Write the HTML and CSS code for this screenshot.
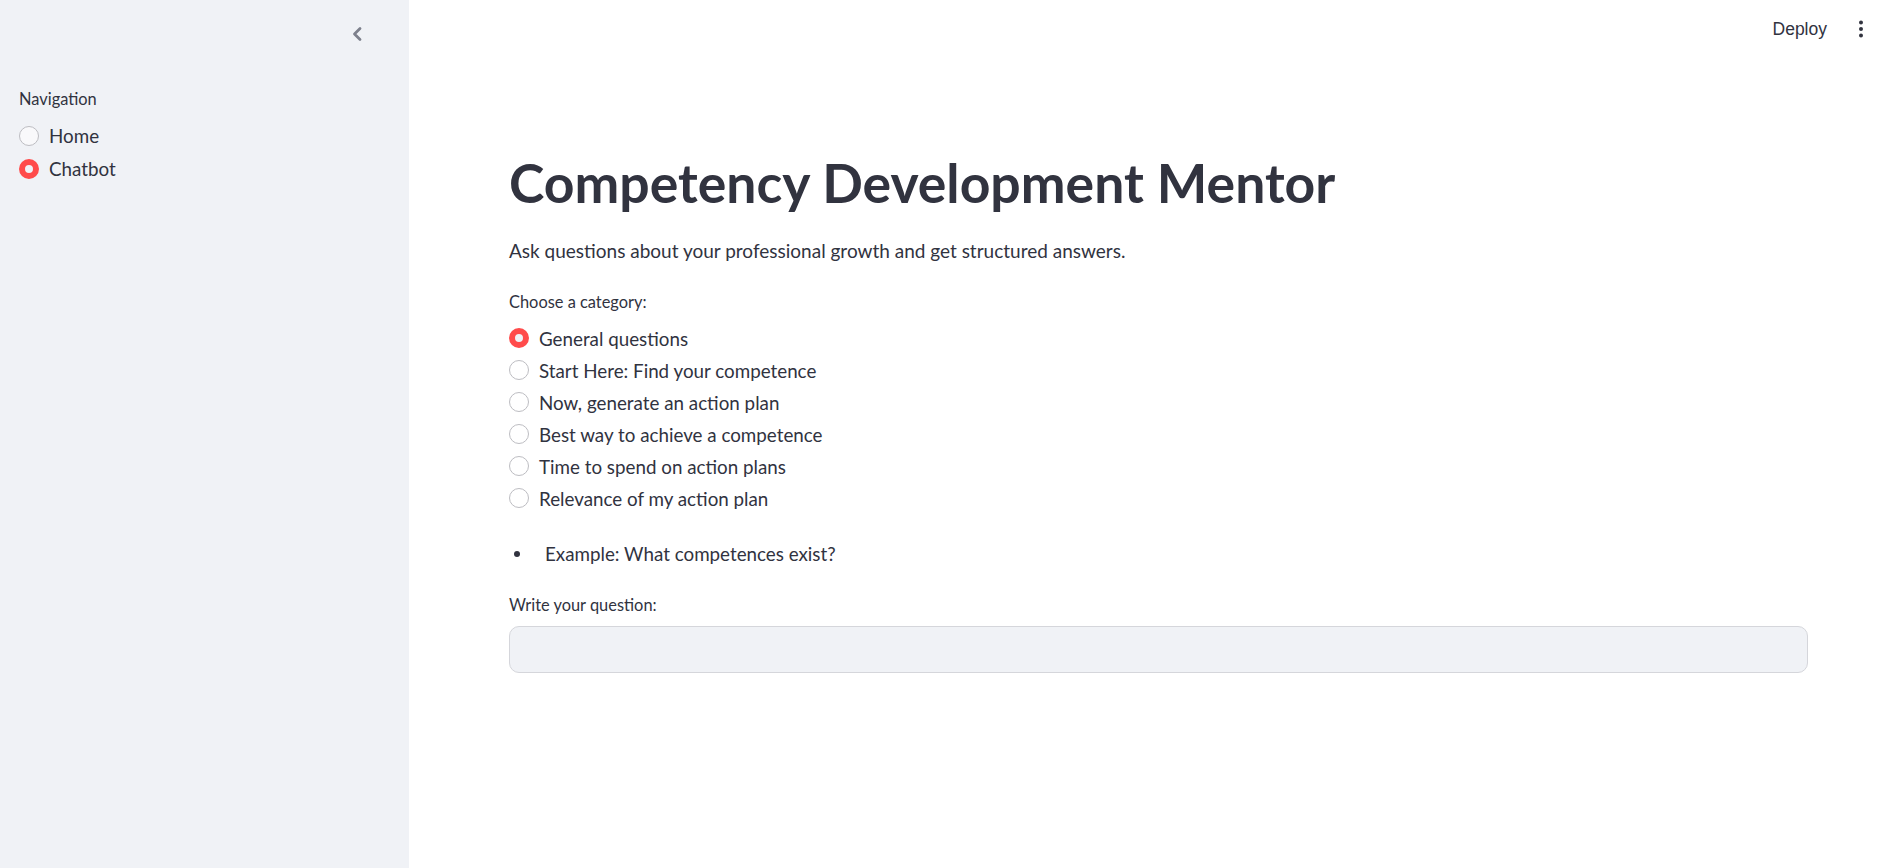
FILE: index.html
```html
<!DOCTYPE html>
<html lang="en">

<head>
    <meta charset="UTF-8">
    <meta name="viewport" content="width=device-width, initial-scale=1.0">
    <title>Competency Development Mentor</title>
    <link rel="stylesheet" href="styles.css">
</head>

<body>
    <div class="app">
        <!-- Sidebar with page navigation -->
        <aside class="sidebar">
            <div class="sidebar-top">
                <span class="collapse">
                    <svg width="12" height="16" viewBox="0 0 12 16">
                        <path d="M9 2.5 L3.5 8 L9 13.5" fill="none" stroke="#7d808c" stroke-width="2.8" stroke-linecap="round" stroke-linejoin="round"/>
                    </svg>
                </span>
            </div>
            <div class="widget-label nav-label">Navigation</div>
            <div class="radio-group">
                <div class="radio"><span class="dot"></span>Home</div>
                <div class="radio checked"><span class="dot"></span>Chatbot</div>
            </div>
        </aside>

        <main class="main">
            <header class="toolbar">
                <span class="deploy">Deploy</span>
                <span class="menu">
                    <svg width="6" height="18" viewBox="0 0 6 18">
                        <circle cx="3" cy="2.5" r="2" fill="#31333f"/>
                        <circle cx="3" cy="9" r="2" fill="#31333f"/>
                        <circle cx="3" cy="15.5" r="2" fill="#31333f"/>
                    </svg>
                </span>
            </header>

            <div class="block">
                <h1>Competency Development Mentor</h1>
                <p class="intro">Ask questions about your professional growth and get structured answers.</p>

                <div class="widget-label">Choose a category:</div>
                <div class="radio-group">
                    <div class="radio checked"><span class="dot"></span>General questions</div>
                    <div class="radio"><span class="dot"></span>Start Here: Find your competence</div>
                    <div class="radio"><span class="dot"></span>Now, generate an action plan</div>
                    <div class="radio"><span class="dot"></span>Best way to achieve a competence</div>
                    <div class="radio"><span class="dot"></span>Time to spend on action plans</div>
                    <div class="radio"><span class="dot"></span>Relevance of my action plan</div>
                </div>

                <div class="example"><span class="bullet"></span>Example: What competences exist?</div>

                <div class="widget-label question-label">Write your question:</div>
                <div class="text-input"></div>
            </div>
        </main>
    </div>
</body>

</html>
```

FILE: styles.css
```css
* {
    box-sizing: border-box;
}

body {
    margin: 0;
    font-family: Lato, "Noto Sans", sans-serif;
    color: #31333f;
    background: #ffffff;
}

.app {
    display: flex;
    height: 100vh;
}

/* Sidebar */
.sidebar {
    width: 409px;
    flex-shrink: 0;
    background: #f0f2f6;
    padding: 0 0 0 19px;
}

.sidebar-top {
    height: 88px;
    display: flex;
    justify-content: flex-end;
    padding: 26px 46px 0 0;
}

.collapse {
    display: flex;
    width: 12px;
    height: 16px;
}

.widget-label {
    font-size: 16.4px;
    line-height: 22px;
    margin-bottom: 9px;
}

.radio-group {
    display: flex;
    flex-direction: column;
}

.radio {
    display: flex;
    align-items: center;
    height: 32px;
    font-size: 18.8px;
}

.sidebar .radio {
    height: 33px;
}

.dot {
    width: 20px;
    height: 20px;
    border-radius: 50%;
    border: 1px solid #bdbdc2;
    background: #ffffff;
    margin-right: 10px;
    flex-shrink: 0;
}

.sidebar .dot {
    background: #f9f9fb;
    margin-right: 10px;
}

.radio.checked .dot {
    border: 6px solid #ff4b4b;
    background: #f0f2f6;
}

/* Main area */
.main {
    flex: 1;
    display: flex;
    flex-direction: column;
    padding: 0 84px 0 100px;
}

.toolbar {
    height: 58px;
    display: flex;
    justify-content: flex-end;
    align-items: center;
    margin-right: -84px;
    padding-right: 28px;
}

.deploy {
    font-family: "Liberation Sans", Arial, sans-serif;
    font-size: 17.5px;
    margin-right: 31px;
}

.menu {
    display: flex;
}

.block {
    padding-top: 91px;
}

h1 {
    margin: 0;
    font-size: 53.5px;
    line-height: 66px;
    font-weight: 700;
}

.intro {
    margin: 22px 0 26px;
    font-size: 19px;
    line-height: 28px;
}

.example {
    display: flex;
    align-items: center;
    margin: 26px 0 26px;
    font-size: 18.8px;
    line-height: 28px;
}

.bullet {
    width: 6px;
    height: 6px;
    border-radius: 50%;
    background: #31333f;
    margin: 0 25px 0 5px;
}

.question-label {
    margin-bottom: 10px;
}

.text-input {
    height: 47px;
    background: #f0f2f6;
    border: 1px solid #d5d6db;
    border-radius: 10px;
}
```
